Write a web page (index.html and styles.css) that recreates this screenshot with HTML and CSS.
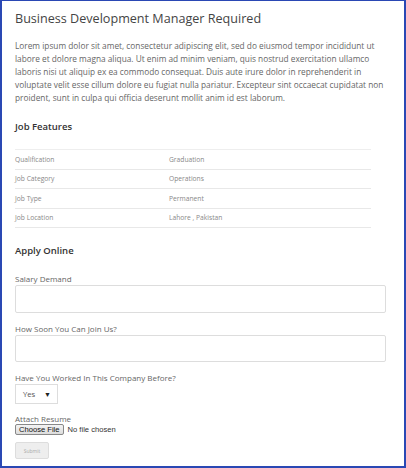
FILE: index.html
```html
<!DOCTYPE html>
<html lang="en">
<head>
    <meta charset="UTF-8">
    <meta name="viewport" content="width=device-width, initial-scale=1.0">
    <title>Business Development Manager Required</title>
    <link rel="stylesheet" href="styles.css">
</head>
<body>
<div class="job-box">
    <h1>Business Development Manager Required</h1>
    <p class="job-desc">Lorem ipsum dolor sit amet, consectetur adipiscing elit, sed do eiusmod tempor incididunt ut labore et dolore magna aliqua. Ut enim ad minim veniam, quis nostrud exercitation ullamco laboris nisi ut aliquip ex ea commodo consequat. Duis aute irure dolor in reprehenderit in voluptate velit esse cillum dolore eu fugiat nulla pariatur. Excepteur sint occaecat cupidatat non proident, sunt in culpa qui officia deserunt mollit anim id est laborum.</p>

    <h2>Job Features</h2>
    <table class="features">
        <tr><td>Qualification</td><td>Graduation</td></tr>
        <tr><td>Job Category</td><td>Operations</td></tr>
        <tr><td>Job Type</td><td>Permanent</td></tr>
        <tr><td>Job Location</td><td>Lahore , Pakistan</td></tr>
    </table>

    <h2 class="apply-title">Apply Online</h2>
    <form class="apply-form">
        <div class="field">
            <label for="salary">Salary Demand</label>
            <input type="text" id="salary" name="salary">
        </div>
        <div class="field">
            <label for="join">How Soon You Can Join Us?</label>
            <input type="text" id="join" name="join">
        </div>
        <div class="field select-field">
            <label for="worked">Have You Worked In This Company Before?</label>
            <div class="select-box" id="worked">
                <span>Yes</span>
                <span class="arrow">&#9660;</span>
            </div>
        </div>
        <div class="field file-field">
            <label for="resume">Attach Resume</label>
            <div class="file-row">
                <span class="file-btn">Choose File</span>
                <span class="file-name">No file chosen</span>
            </div>
        </div>
        <button type="submit" disabled>Submit</button>
    </form>
</div>
</body>
</html>
```

FILE: styles.css
```css
html, body { margin: 0; padding: 0; }
body { font-family: "Open Sans", sans-serif; background: #fff; }
.job-box {
    width: 406px; height: 468px; box-sizing: border-box;
    border: 2px solid #2a48b4; border-top-width: 1px;
    padding: 9px 19px 0 13px; overflow: hidden;
}
h1 { font-size: 12.6px; font-weight: 400; color: #444; margin: 0 0 11px 0; line-height: 18px; }
.job-desc { font-size: 8.3px; line-height: 13px; color: #666; margin: 0 0 16px 0; }
h2 { font-size: 9.5px; font-weight: 600; color: #333; margin: 0 0 15px 0; line-height: 14px; }
.features { width: 356px; border-collapse: collapse; border-top: 1px solid #eee; margin-bottom: 16px; }
.features td { font-size: 6.7px; color: #888; height: 18.5px; padding: 0; border-bottom: 1px solid #e8e8e8; vertical-align: middle; }
.features td:first-child { width: 154px; }
.apply-title { margin-bottom: 15px; }
.field { margin-bottom: 10px; }
.field label { display: block; font-size: 8px; color: #666; line-height: 11px; margin-bottom: 1px; }
.field input {
    display: block; width: 371px; height: 27.5px; box-sizing: border-box;
    border: 1px solid #ddd; border-radius: 2px; margin: 0;
}
.select-box {
    width: 43px; height: 20px; box-sizing: border-box; border: 1px solid #ddd;
    display: flex; align-items: center; justify-content: space-between;
    padding: 0 6px 0 7px; font-size: 7.7px; color: #555;
}
.select-box .arrow { font-size: 7px; color: #222; }
.field.select-field { margin-bottom: 9px; }
.file-field { margin-bottom: 7px; }
.file-field label { margin-bottom: 0; }
.file-row { display: flex; align-items: center; gap: 4px; font-family: "Liberation Sans", Arial, sans-serif; font-size: 7.6px; }
.file-btn {
    border: 1px solid #888; border-radius: 2px; background: linear-gradient(#f4f4f4, #dcdcdc);
    padding: 0 3px; line-height: 9px; color: #111;
}
.file-name { color: #333; }
button {
    display: block; font-family: "Open Sans", sans-serif; font-size: 5px; color: #aaa;
    width: 34px; height: 17px; padding: 0; border: 1px solid #ddd; border-radius: 2px;
    background: #eee; margin: 0;
}
```
